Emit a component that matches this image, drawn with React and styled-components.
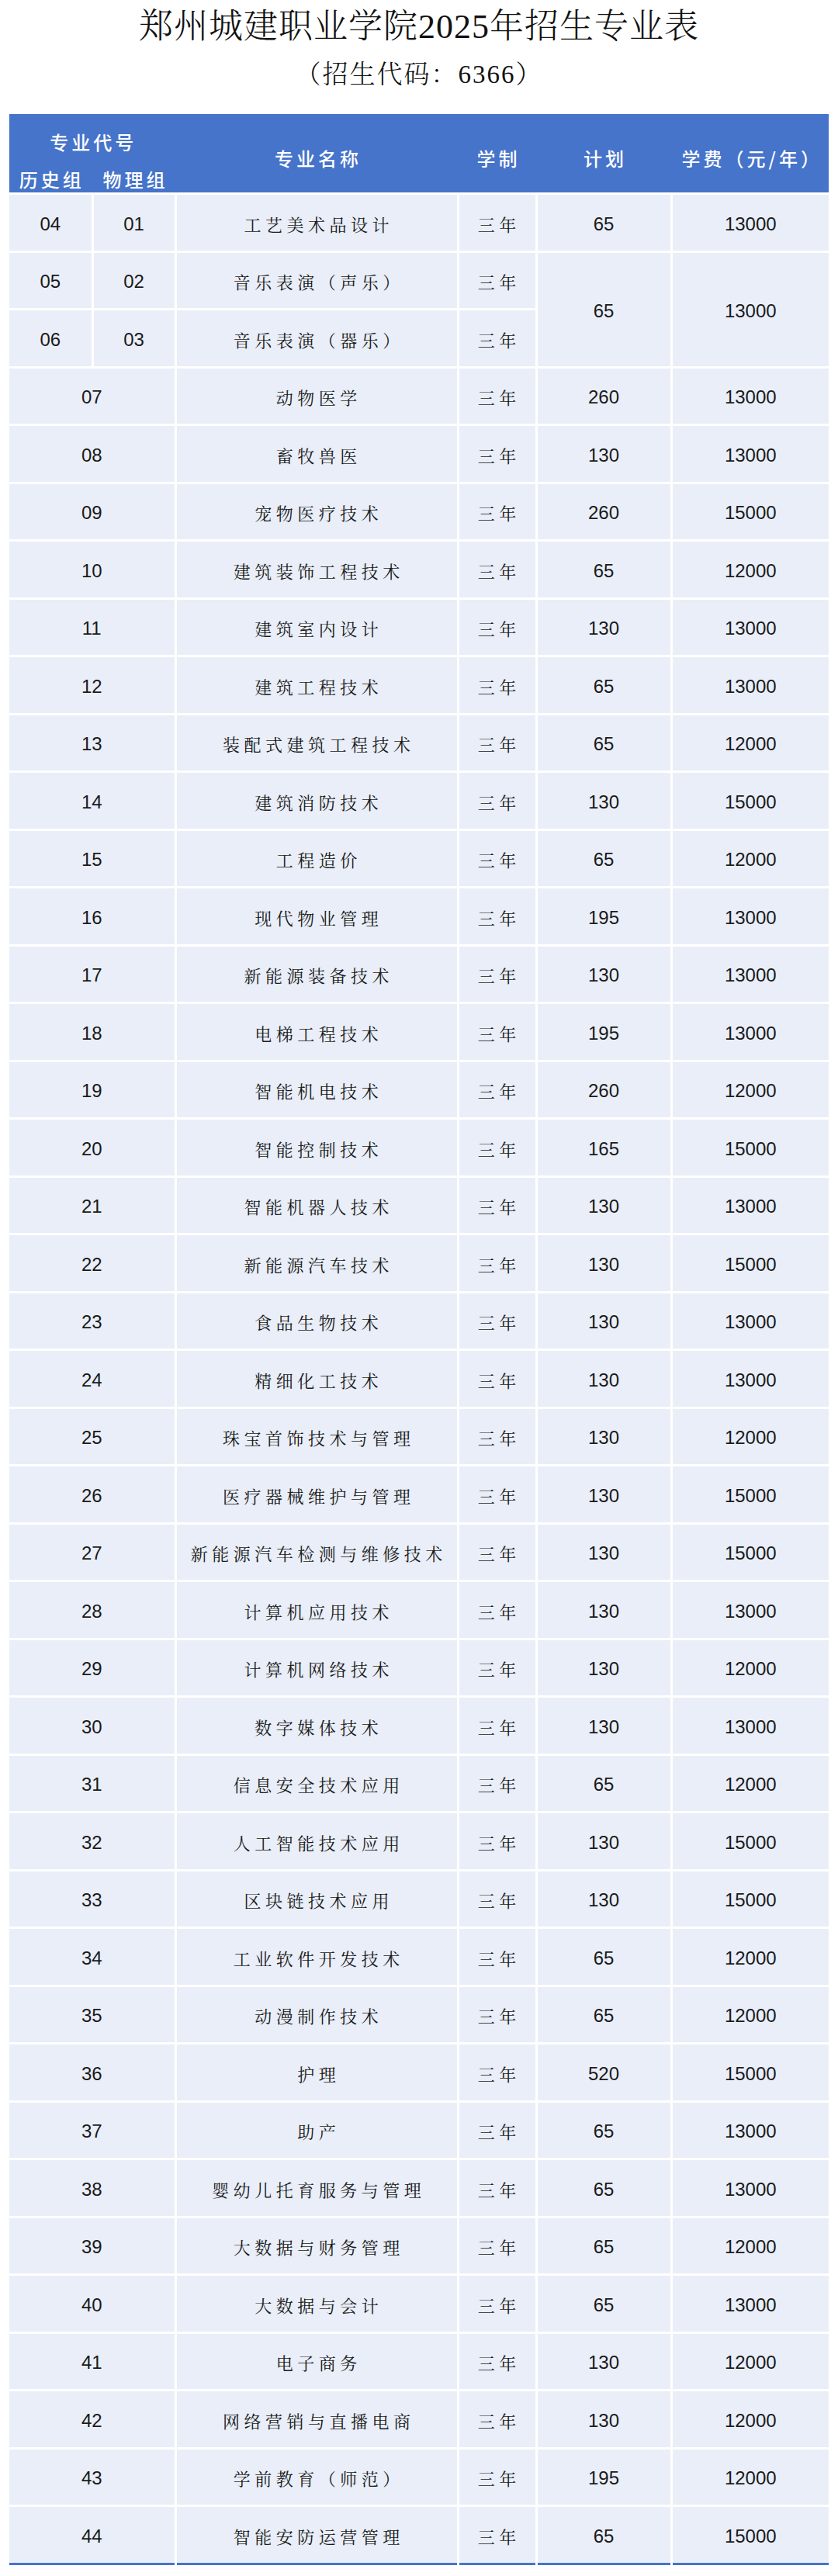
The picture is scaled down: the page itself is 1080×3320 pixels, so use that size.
import React from "react";
import styled, { createGlobalStyle } from "styled-components";

const Global = createGlobalStyle`
  html, body { margin: 0; padding: 0; background: #ffffff; }
  body { width: 1080px; }
`;

const BLUE = "#4674CA";
const CELL = "#E9EEF8";
const COLS = "105.5px 104px 361px 98px 171px 201.5px";

const Page = styled.div`
  width: 1080px;
  box-sizing: border-box;
  padding: 12px 12px 12px;
  display: flex;
  flex-direction: column;
  align-items: stretch;
`;

const Title = styled.h1`
  margin: 0;
  text-align: center;
  font-family: "Liberation Serif", "Noto Serif CJK SC", "Noto Sans CJK SC", serif;
  font-weight: 300;
  font-size: 44px;
  line-height: 45px;
  letter-spacing: 1px;
  color: #111;
`;

const Subtitle = styled.div`
  margin: 22px 0 0;
  text-align: center;
  font-family: "Liberation Serif", "Noto Serif CJK SC", "Noto Sans CJK SC", serif;
  font-weight: 300;
  font-size: 33px;
  line-height: 34px;
  letter-spacing: 2px;
  color: #111;
`;

const Table = styled.div`
  margin-top: 34px;
  display: flex;
  flex-direction: column;
  gap: 3px;
  background: #ffffff;
`;

const Head = styled.div`
  display: grid;
  grid-template-columns: ${COLS};
  grid-template-rows: 72px 29px;
  column-gap: 3px;
  background: ${BLUE};
  color: #ffffff;
  font-family: "Noto Sans CJK SC", sans-serif;
  font-weight: 500;
  font-size: 24px;
  letter-spacing: 4px;
`;

const HeadCell = styled.div`
  grid-column: ${(p) => p.$col};
  grid-row: ${(p) => p.$row};
  display: flex;
  align-items: ${(p) => (p.$align ? p.$align : "center")};
  justify-content: center;
  padding-top: ${(p) => (p.$pt ? p.$pt : 0)}px;
  padding-left: 4px;
  line-height: 1;
  white-space: nowrap;
`;

const Body = styled.div`
  display: grid;
  grid-template-columns: ${COLS};
  grid-auto-rows: 71.5px;
  gap: 3px;
  background: #ffffff;
`;

const Cell = styled.div`
  grid-column: ${(p) => p.$col};
  grid-row: ${(p) => p.$row};
  background: ${CELL};
  display: flex;
  align-items: center;
  justify-content: center;
  color: #1a1a1a;
  white-space: nowrap;
  border-bottom: ${(p) => (p.$last ? `3px solid ${BLUE}` : "none")};
  margin-bottom: ${(p) => (p.$last ? "-3px" : "0")};
  padding-top: 4px;
  box-sizing: border-box;
`;

const Num = styled.span`
  font-family: "Liberation Sans", Arial, sans-serif;
  font-size: 24px;
  line-height: 1;
`;

const Zh = styled.span`
  font-family: "AR PL UKai CN", "KaiTi", "STKaiti", "Noto Serif CJK SC", "Noto Sans CJK SC", serif;
  font-weight: 400;
  font-size: 22px;
  line-height: 1;
  letter-spacing: 5.5px;
  padding-left: 5.5px;
`;

const rows = [
  ["07", "动物医学", "260", "13000"],
  ["08", "畜牧兽医", "130", "13000"],
  ["09", "宠物医疗技术", "260", "15000"],
  ["10", "建筑装饰工程技术", "65", "12000"],
  ["11", "建筑室内设计", "130", "13000"],
  ["12", "建筑工程技术", "65", "13000"],
  ["13", "装配式建筑工程技术", "65", "12000"],
  ["14", "建筑消防技术", "130", "15000"],
  ["15", "工程造价", "65", "12000"],
  ["16", "现代物业管理", "195", "13000"],
  ["17", "新能源装备技术", "130", "13000"],
  ["18", "电梯工程技术", "195", "13000"],
  ["19", "智能机电技术", "260", "12000"],
  ["20", "智能控制技术", "165", "15000"],
  ["21", "智能机器人技术", "130", "13000"],
  ["22", "新能源汽车技术", "130", "15000"],
  ["23", "食品生物技术", "130", "13000"],
  ["24", "精细化工技术", "130", "13000"],
  ["25", "珠宝首饰技术与管理", "130", "12000"],
  ["26", "医疗器械维护与管理", "130", "15000"],
  ["27", "新能源汽车检测与维修技术", "130", "15000"],
  ["28", "计算机应用技术", "130", "13000"],
  ["29", "计算机网络技术", "130", "12000"],
  ["30", "数字媒体技术", "130", "13000"],
  ["31", "信息安全技术应用", "65", "12000"],
  ["32", "人工智能技术应用", "130", "15000"],
  ["33", "区块链技术应用", "130", "15000"],
  ["34", "工业软件开发技术", "65", "12000"],
  ["35", "动漫制作技术", "65", "12000"],
  ["36", "护理", "520", "15000"],
  ["37", "助产", "65", "13000"],
  ["38", "婴幼儿托育服务与管理", "65", "13000"],
  ["39", "大数据与财务管理", "65", "12000"],
  ["40", "大数据与会计", "65", "13000"],
  ["41", "电子商务", "130", "12000"],
  ["42", "网络营销与直播电商", "130", "12000"],
  ["43", "学前教育（师范）", "195", "12000"],
  ["44", "智能安防运营管理", "65", "15000"],
];

export default function App() {
  const lastRow = 3 + rows.length;
  return (
    <Page>
      <Global />
      <Title>郑州城建职业学院2025年招生专业表</Title>
      <Subtitle>（招生代码：6366）</Subtitle>
      <Table>
        <Head>
          <HeadCell $col="1 / 3" $row="1">专业代号</HeadCell>
          <HeadCell $col="1" $row="2" $align="flex-start">历史组</HeadCell>
          <HeadCell $col="2" $row="2" $align="flex-start">物理组</HeadCell>
          <HeadCell $col="3" $row="1 / 3" $pt={12}>专业名称</HeadCell>
          <HeadCell $col="4" $row="1 / 3" $pt={12}>学制</HeadCell>
          <HeadCell $col="5" $row="1 / 3" $pt={12}>计划</HeadCell>
          <HeadCell $col="6" $row="1 / 3" $pt={12}>学费（元/年）</HeadCell>
        </Head>
        <Body>
          <Cell $col="1" $row="1"><Num>04</Num></Cell>
          <Cell $col="2" $row="1"><Num>01</Num></Cell>
          <Cell $col="3" $row="1"><Zh>工艺美术品设计</Zh></Cell>
          <Cell $col="4" $row="1"><Zh>三年</Zh></Cell>
          <Cell $col="5" $row="1"><Num>65</Num></Cell>
          <Cell $col="6" $row="1"><Num>13000</Num></Cell>

          <Cell $col="1" $row="2"><Num>05</Num></Cell>
          <Cell $col="2" $row="2"><Num>02</Num></Cell>
          <Cell $col="3" $row="2"><Zh>音乐表演（声乐）</Zh></Cell>
          <Cell $col="4" $row="2"><Zh>三年</Zh></Cell>
          <Cell $col="5" $row="2 / 4"><Num>65</Num></Cell>
          <Cell $col="6" $row="2 / 4"><Num>13000</Num></Cell>

          <Cell $col="1" $row="3"><Num>06</Num></Cell>
          <Cell $col="2" $row="3"><Num>03</Num></Cell>
          <Cell $col="3" $row="3"><Zh>音乐表演（器乐）</Zh></Cell>
          <Cell $col="4" $row="3"><Zh>三年</Zh></Cell>

          {rows.map(([code, name, plan, fee], i) => {
            const r = 4 + i;
            const last = r === lastRow;
            return (
              <React.Fragment key={code}>
                <Cell $col="1 / 3" $row={r} $last={last}><Num>{code}</Num></Cell>
                <Cell $col="3" $row={r} $last={last}><Zh>{name}</Zh></Cell>
                <Cell $col="4" $row={r} $last={last}><Zh>三年</Zh></Cell>
                <Cell $col="5" $row={r} $last={last}><Num>{plan}</Num></Cell>
                <Cell $col="6" $row={r} $last={last}><Num>{fee}</Num></Cell>
              </React.Fragment>
            );
          })}
        </Body>
      </Table>
    </Page>
  );
}
